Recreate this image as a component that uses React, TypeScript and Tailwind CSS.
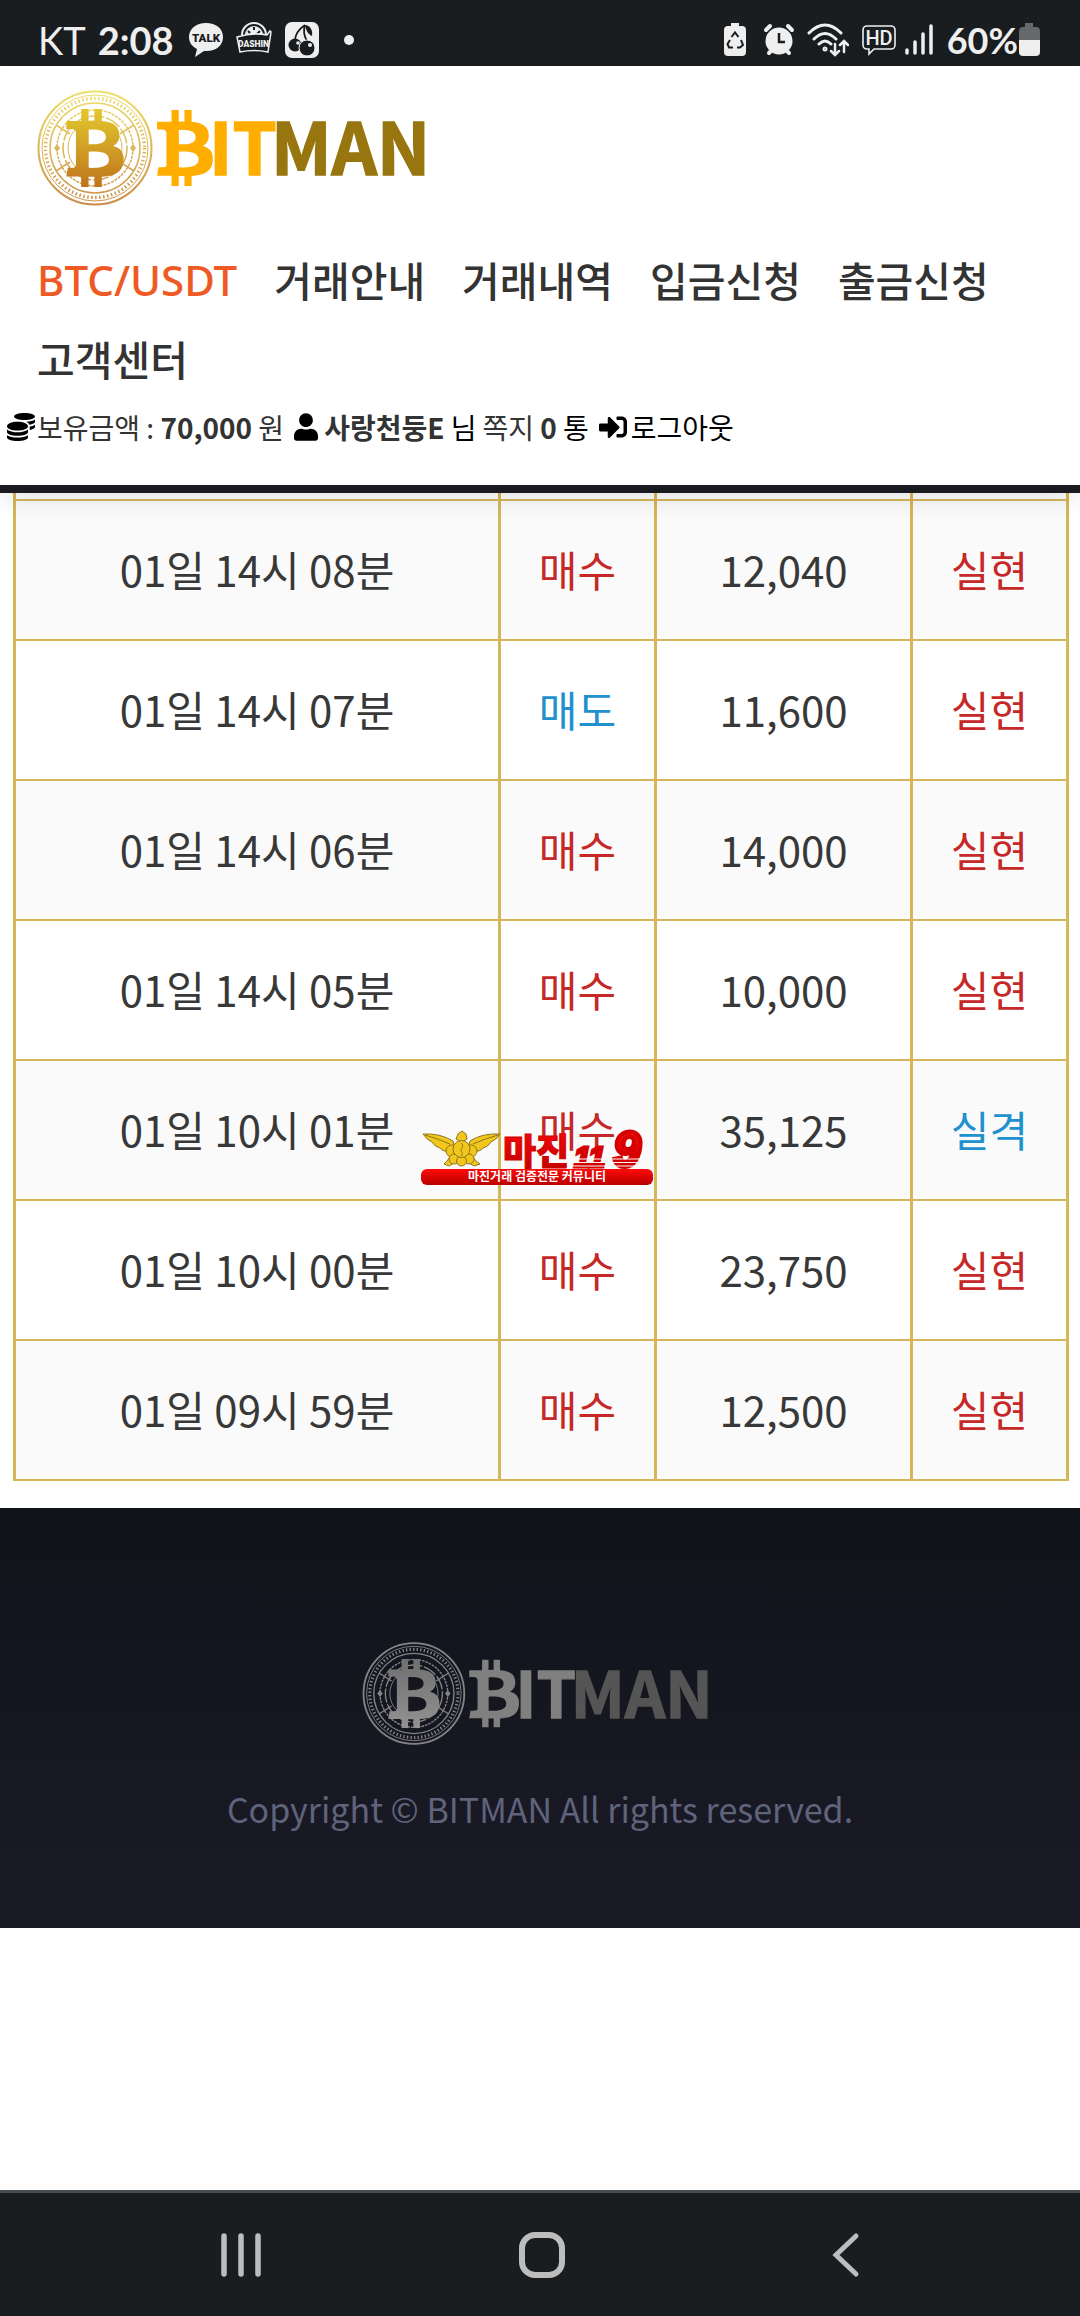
import React from "react";
import { FaBtc, FaCoins, FaUser, FaSignInAlt } from "react-icons/fa";

type Tone = "red" | "blue";
type Trade = { time: string; side: string; sideTone: Tone; amount: string; result: string; resultTone: Tone };

const trades: Trade[] = [
  { time: "01일 14시 08분", side: "매수", sideTone: "red", amount: "12,040", result: "실현", resultTone: "red" },
  { time: "01일 14시 07분", side: "매도", sideTone: "blue", amount: "11,600", result: "실현", resultTone: "red" },
  { time: "01일 14시 06분", side: "매수", sideTone: "red", amount: "14,000", result: "실현", resultTone: "red" },
  { time: "01일 14시 05분", side: "매수", sideTone: "red", amount: "10,000", result: "실현", resultTone: "red" },
  { time: "01일 10시 01분", side: "매수", sideTone: "red", amount: "35,125", result: "실격", resultTone: "blue" },
  { time: "01일 10시 00분", side: "매수", sideTone: "red", amount: "23,750", result: "실현", resultTone: "red" },
  { time: "01일 09시 59분", side: "매수", sideTone: "red", amount: "12,500", result: "실현", resultTone: "red" },
];

const menu = ["BTC/USDT", "거래안내", "거래내역", "입금신청", "출금신청", "고객센터"];

const toneClass: Record<Tone, string> = { red: "text-[#c62828]", blue: "text-[#2190cf]" };

function StatusBar() {
  return (
    <div className="flex h-[66px] items-center justify-between bg-[#191d1f] px-[38px] pt-[14px] font-['Lato',sans-serif] text-[#efefef]">
      <div className="flex items-center">
        <span className="text-[38px] leading-none">KT</span>
        <span className="ml-3 text-[38px] leading-none font-bold">2:08</span>
        <svg className="ml-[14px] h-9 w-9" viewBox="0 0 36 36" aria-label="TALK">
          <path d="M18 1C8 1 1 7 1 15c0 5.500 3 9.500 8 12l-2 8 9-6c12 1 19-5.500 19-14S28 1 18 1Z" fill="#efefef" />
          <text x="18" y="20" textAnchor="middle" fontSize="11.500" fontWeight="900" fill="#191d1f" fontFamily="Roboto, sans-serif">TALK</text>
        </svg>
        <svg className="ml-3 h-9 w-9" viewBox="0 0 36 36" aria-label="DASHIN">
          <path d="M6 13a12 12 0 0 1 24 0" fill="none" stroke="#efefef" strokeWidth="2" />
          <path d="M9 13a9 9 0 0 1 18 0Z" fill="#efefef" />
          <path d="M12 9l2 2M18 5v3M24 9l-3 3" stroke="#191d1f" strokeWidth="2" />
          <path d="M1 15 Q17 10 31 13l3-4 1 1-3 20Q18 27 4 30Z" fill="#191d1f" stroke="#efefef" strokeWidth="1.500" />
          <text x="17.500" y="25" textAnchor="middle" fontSize="8.500" fontWeight="900" fill="#efefef" fontFamily="Roboto, sans-serif">DASHIN</text>
        </svg>
        <svg className="ml-3 h-9 w-9" viewBox="0 0 36 36" aria-hidden="true">
          <rect x="1" y="0" width="34" height="36" rx="7" fill="#efefef" />
          <g fill="none" stroke="#191d1f" strokeWidth="1.800">
            <path d="M21 3C15 7 11 12 11 19M21 3c-2 6-1 11 2 16" />
          </g>
          <path d="M21 3c5 0 8 5 7 11-4-2-6-5-7-11Z" fill="#191d1f" />
          <circle cx="11" cy="23" r="6.500" fill="#191d1f" />
          <circle cx="23" cy="26" r="8" fill="#191d1f" stroke="#efefef" />
          <circle cx="14" cy="21" r="1.800" fill="#efefef" />
          <circle cx="26" cy="23" r="2" fill="#efefef" />
        </svg>
        <span className="ml-6 h-[10px] w-[10px] rounded-full bg-[#efefef]" />
      </div>
      <div className="flex items-center">
        <svg className="h-9 w-6" viewBox="0 0 24 36" aria-hidden="true">
          <path d="M8 1h8v3h3a4 4 0 0 1 4 4v22a4 4 0 0 1-4 4H5a4 4 0 0 1-4-4V8a4 4 0 0 1 4-4h3Z" fill="#efefef" />
          <path d="M8.500 15 12 10.500l3.500 4.500M18 18l2 5-3 2.500h-3M10 25.500H6L4.500 22 7 18" fill="none" stroke="#191d1f" strokeWidth="2" />
        </svg>
        <svg className="ml-4 h-9 w-8" viewBox="0 0 32 36" aria-hidden="true">
          <g stroke="#efefef" strokeWidth="4" strokeLinecap="round">
            <path d="M3 8l4-4M29 8l-4-4M6 31l4-4M26 31l-4-4" />
          </g>
          <circle cx="16" cy="19" r="13.500" fill="#efefef" />
          <path d="M16 11v9h6" fill="none" stroke="#191d1f" strokeWidth="2.500" />
        </svg>
        <svg className="ml-3 h-9 w-[42px]" viewBox="0 0 42 36" fill="none" stroke="#efefef" strokeWidth="3" strokeLinecap="round" aria-hidden="true">
          <path d="M2 11Q18-5 34 11M7 17Q18 6 29 17M12 22q6-6 12 0" />
          <circle cx="18" cy="27" r="1" />
          <path d="M28 22v10M24 29l4 4 4-4M37 30V20M33 23l4-4 4 4" strokeWidth="2.500" />
        </svg>
        <svg className="ml-3 h-9 w-9" viewBox="0 0 36 36" aria-label="HD">
          <path d="M6 4h24a4 4 0 0 1 4 4v15a4 4 0 0 1-4 4H13l-5 5v-5H6a4 4 0 0 1-4-4V8a4 4 0 0 1 4-4Z" fill="none" stroke="#efefef" strokeWidth="1.600" />
          <text x="18" y="23" textAnchor="middle" fontSize="20" fontWeight="500" fill="#efefef" fontFamily="Roboto, sans-serif">HD</text>
        </svg>
        <svg className="ml-2 h-9 w-7" viewBox="0 0 28 36" stroke="#efefef" strokeWidth="3.500" strokeLinecap="round" aria-hidden="true">
          <path d="M2 28v3M10 20v11M18 12v19M26 4v27" />
        </svg>
        <span className="ml-[14px] text-[36px] leading-none font-bold">60%</span>
        <svg className="h-9 w-6" viewBox="0 0 24 36" aria-hidden="true">
          <path d="M7 1h8v4h3a4 4 0 0 1 4 4v9H1V9a4 4 0 0 1 4-4h2Z" fill="#66686a" />
          <path d="M1 18h21v12a4 4 0 0 1-4 4H5a4 4 0 0 1-4-4Z" fill="#efefef" />
        </svg>
      </div>
    </div>
  );
}

type LogoProps = { id: string; className: string; top: string; bottom: string; markTop: string; markBottom: string; first: string; second: string };

function Logo({ id, className, top, bottom, markTop, markBottom, first, second }: LogoProps) {
  const ring = `url(#${id}-ring)`;
  return (
    <svg className={className} viewBox="0 0 400 120" role="img" aria-label="BITMAN">
      <defs>
        <linearGradient id={`${id}-ring`} gradientUnits="userSpaceOnUse" x1="0" y1="0" x2="0" y2="120">
          <stop offset="0" stopColor={top} />
          <stop offset="1" stopColor={bottom} />
        </linearGradient>
        <linearGradient id={`${id}-mark`} x1="0" y1="0" x2="0" y2="1">
          <stop offset="0" stopColor={markTop} />
          <stop offset="1" stopColor={markBottom} />
        </linearGradient>
      </defs>
      <g fill="none" stroke={ring}>
        <circle cx="58" cy="60" r="56.500" strokeWidth="2" />
        <circle cx="58" cy="60" r="53" strokeWidth="1" />
        <circle cx="58" cy="60" r="49.500" strokeWidth="3.500" strokeDasharray="1.500 2.500" />
        <circle cx="58" cy="60" r="45" strokeWidth="1.500" />
        <circle cx="58" cy="60" r="38" strokeWidth="1.500" strokeDasharray="3 1" />
        <circle cx="58" cy="60" r="32" strokeWidth="1.500" strokeDasharray="16 2" />
        <circle cx="58" cy="60" r="27" strokeWidth="1" />
        <path d="M19 37l14 9M19 83l14-9M97 37l-14 9M97 83l-14-9" strokeWidth="1.500" />
      </g>
      <g fill={ring}>
        <path d="M20 56l3 4-3 4-3-4ZM96 56l3 4-3 4-3-4Z" />
      </g>
      <FaBtc x="19" y="21" size={78} fill={`url(#${id}-mark)`} />
      <FaBtc x="110" y="22" size={76} fill={first} />
      <g fontFamily="Noto Sans CJK KR, sans-serif" fontWeight="700" fontSize="71" strokeWidth="1.500">
        <text x="172" y="87" fill={first} stroke={first}>IT</text>
        <text x="234" y="87" fill={second} stroke={second}>MAN</text>
      </g>
    </svg>
  );
}

function Header() {
  return (
    <header className="relative z-10 border-b-8 border-[#191b20] bg-white shadow-[0_4px_24px_rgba(0,0,0,0.12)]">
      <a href="#home" className="block px-[37px] pt-[22px]">
        <Logo id="head" className="h-[120px] w-[400px]" top="#efe26a" bottom="#c98a45" markTop="#e3c92e" markBottom="#bf741c" first="#ffae00" second="#98760f" />
      </a>
      <nav className="flex flex-wrap gap-x-[37px] px-[37px] pt-8 text-[41px] leading-[79px] text-[#333]">
        {menu.map((item, i) => (
          <a key={item} href={`#menu-${i}`} className={i === 0 ? "font-['Noto_Sans','Noto_Sans_CJK_KR',sans-serif] text-[42px] font-medium text-[#ee5a24]" : "font-medium"}>
            {item}
          </a>
        ))}
      </nav>
      <div className="flex items-center px-[7px] pt-[2px] pb-[31px] text-[28px] leading-[54px] whitespace-pre text-[#333]">
        <FaCoins className="h-7 w-7 text-black" />
        <span className="ml-[2px]">보유금액 : <b>70,000</b> 원</span>
        <FaUser className="ml-[10px] h-7 w-6 text-black" />
        <a href="#profile" className="ml-[6px] text-black"><b className="text-[#333]">사랑천둥E</b> 님</a>
        <a href="#messages" className="ml-[6px] text-black"><span className="text-[#333]">쪽지 <b>0</b></span> 통</a>
        <FaSignInAlt className="ml-[10px] h-7 w-7 text-black" />
        <a href="#logout" className="ml-1 text-black">로그아웃</a>
      </div>
    </header>
  );
}

function Emblem() {
  return (
    <svg className="absolute right-0 bottom-[14px] z-10 h-[56px] w-[234px] overflow-visible" viewBox="0 0 234 56" role="img" aria-label="마진119 마진거래 검증전문 커뮤니티">
      <defs>
        <linearGradient id="emblem-red" x1="0" y1="0" x2="0" y2="1">
          <stop offset="0" stopColor="#ff0a0a" />
          <stop offset="1" stopColor="#b80000" />
        </linearGradient>
      </defs>
      <g fill="#f2c71c" stroke="#8d7420" strokeWidth="1">
        <path d="M33 12Q20 4 3 5q4 6 9 8 3 5 8 6 3 4 9 3l6-3ZM50 12Q62 4 80 5q-4 6-9 8-3 5-8 6-3 4-9 3l-6-3Z" />
        <path d="M33 24l-6 8-3 3 5 2 8-5ZM50 24l6 8 4 3-6 2-8-5Z" />
        <circle cx="32" cy="22" r="6" />
        <circle cx="51" cy="22" r="6" />
        <circle cx="34" cy="30" r="5" />
        <circle cx="49" cy="30" r="5" />
        <circle cx="41.500" cy="32" r="5" />
        <path d="M38 5l4-3 4 3 1 5-5 3-6-3Z" />
        <circle cx="41.500" cy="20" r="8.500" />
        <path d="M41 14c4 3 0 5 0 7s3 3 0 6M5 6q14 4 25 9M78 6q-14 4-25 9" fill="none" />
      </g>
      <text x="83" y="36" fontSize="36" fontWeight="900" fill="url(#emblem-red)" stroke="#d60000" strokeWidth="1" fontFamily="Noto Sans CJK KR, sans-serif">마진</text>
      <g fill="url(#emblem-red)" stroke="#d60000" fontFamily="Liberation Sans, sans-serif" fontWeight="700" fontStyle="italic">
        <text x="154" y="38" fontSize="30" strokeWidth="3">11</text>
        <text x="193" y="38" fontSize="50" strokeWidth="4">9</text>
      </g>
      <path d="M152 30h76M152 33.500h76M152 37h76" stroke="#fafafa" strokeWidth="1" />
      <rect x="1" y="40" width="232" height="16" rx="6" fill="url(#emblem-red)" />
      <text x="117" y="52" textAnchor="middle" fontSize="12" fontWeight="700" fill="#fff" fontFamily="Noto Sans CJK KR, sans-serif">마진거래 검증전문 커뮤니티</text>
    </svg>
  );
}

function TradeTable() {
  const cell = "border-x-[3px] border-y-2 border-[#d6b65a] px-0 pt-0 pb-1";
  return (
    <div className="pr-3 pl-[13px]">
      <table className="w-full table-fixed border-collapse text-center text-[42px] text-[#383838]">
        <colgroup>
          <col className="w-[485px]" />
          <col className="w-[156px]" />
          <col className="w-[256px]" />
          <col className="w-[156px]" />
        </colgroup>
        <tbody>
          <tr className="h-[7px] bg-white" aria-hidden="true">
            {[0, 1, 2, 3].map((c) => (
              <td key={c} className="border-x-[3px] border-b-2 border-[#d6b65a] p-0" />
            ))}
          </tr>
          {trades.map((t, i) => (
            <tr key={t.time} className="h-[140px] odd:bg-white even:bg-[#fafafa]">
              <td className={cell}>{t.time}</td>
              <td className={`${cell} relative ${toneClass[t.sideTone]}`}>
                {t.side}
                {i === 4 && <Emblem />}
              </td>
              <td className={cell}>{t.amount}</td>
              <td className={`${cell} ${toneClass[t.resultTone]}`}>{t.result}</td>
            </tr>
          ))}
        </tbody>
      </table>
    </div>
  );
}

export default function App() {
  return (
    <div className="flex min-h-screen flex-col bg-white font-['Noto_Sans_CJK_KR',sans-serif]">
      <StatusBar />
      <Header />
      <TradeTable />
      <footer className="mt-[27px] flex flex-col items-center bg-linear-to-b from-[#10131a] to-[#1b1b27] pt-[132px] pb-[93px]">
        <Logo id="foot" className="h-[107px] w-[357px]" top="#858585" bottom="#858585" markTop="#6f6f6f" markBottom="#929292" first="#808080" second="#555555" />
        <p className="mt-9 text-[34px] leading-[52px] text-[#5f637b]">Copyright © BITMAN All rights reserved.</p>
      </footer>
      <div className="grow" />
      <nav className="grid h-[126px] grid-cols-3 border-t-[3px] border-[#464c50] bg-[#191d1f] pr-[85px] pl-[90px] text-[#bdbdbd]">
        <button type="button" aria-label="Recent apps" className="flex items-center justify-center">
          <svg className="h-12 w-12" viewBox="0 0 48 48" stroke="currentColor" strokeWidth="5.500" strokeLinecap="round">
            <path d="M7 5v38M24 5v38M41 5v38" />
          </svg>
        </button>
        <button type="button" aria-label="Home" className="flex items-center justify-center">
          <svg className="h-12 w-12" viewBox="0 0 48 48" fill="none" stroke="currentColor" strokeWidth="6">
            <rect x="4" y="4" width="40" height="40" rx="13" />
          </svg>
        </button>
        <button type="button" aria-label="Back" className="flex items-center justify-center">
          <svg className="h-12 w-12" viewBox="0 0 48 48" fill="none" stroke="currentColor" strokeWidth="5" strokeLinecap="round">
            <path d="M36 5 16 24l20 19" />
          </svg>
        </button>
      </nav>
    </div>
  );
}
